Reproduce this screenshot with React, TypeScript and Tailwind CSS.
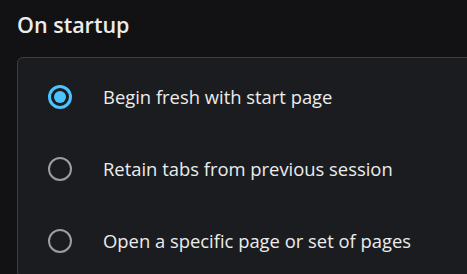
import { useState } from "react";

const OPTIONS = [
  "Begin fresh with start page",
  "Retain tabs from previous session",
  "Open a specific page or set of pages",
];

function Radio({ checked }: { checked: boolean }) {
  return checked ? (
    <span className="flex h-[24px] w-[24px] shrink-0 items-center justify-center rounded-full border-[3.5px] border-[#4cc2ff]">
      <span className="h-[12px] w-[12px] rounded-full bg-[#4cc2ff]" />
    </span>
  ) : (
    <span className="h-[24px] w-[24px] shrink-0 rounded-full border-[2.5px] border-[#9e9ea0]" />
  );
}

export default function App() {
  const [selected, setSelected] = useState(0);

  return (
    <div className="h-[274px] w-[467px] overflow-hidden bg-[#121214] pl-[17px] pt-[10px] font-['Open_Sans',sans-serif] text-[#ececec]">
      <h2 className="text-[21.5px] font-semibold leading-[30px]">On startup</h2>
      <div className="mt-[17px] w-[470px] rounded-[6px] border border-[#3b3e43] bg-[#1a1c20] pt-[3px]">
        {OPTIONS.map((label, i) => (
          <button
            key={label}
            onClick={() => setSelected(i)}
            className="flex h-[72px] w-full items-center gap-[31px] pl-[30px] text-left"
          >
            <Radio checked={selected === i} />
            <span className="text-[18.4px]">{label}</span>
          </button>
        ))}
      </div>
    </div>
  );
}
